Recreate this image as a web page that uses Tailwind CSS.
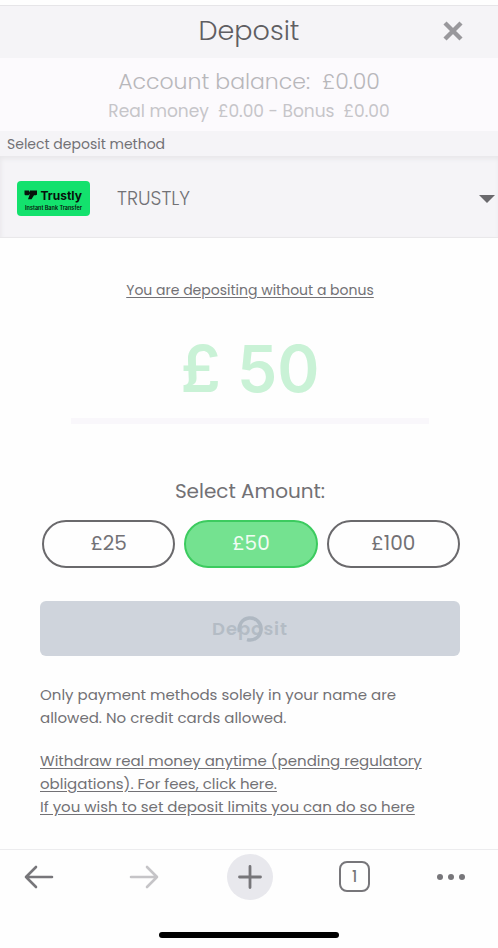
<!DOCTYPE html>
<html lang="en">
<head>
<meta charset="utf-8">
<meta name="viewport" content="width=device-width, initial-scale=1">
<title>Deposit</title>
<script src="https://cdn.jsdelivr.net/npm/@tailwindcss/browser@4"></script>
</head>
<body class="flex min-h-screen flex-col bg-[#fefefe] font-['Poppins','Inter',sans-serif] text-[#727175]">
  <header class="mt-[5px] grid h-[53px] grid-cols-[1fr_auto_1fr] items-center border-t border-[#e6e5e8] bg-[#f5f4f7] px-[31px] pb-[2px]">
    <h1 class="col-start-2 text-[27px] font-light leading-8 text-[#5f5e62]">Deposit</h1>
    <button type="button" aria-label="Close" class="justify-self-end p-1 text-[#99989c]">
      <svg class="size-5" viewBox="0 0 20 20" fill="none" stroke="currentColor" stroke-width="4.4"><path d="M2 2 18 18M18 2 2 18"/></svg>
    </button>
  </header>

  <main class="flex-1">
    <section class="h-[73px] bg-[#fcfafd] pt-2 text-center text-[#c6c5c9]">
      <p class="text-[22px] font-light leading-8 text-[#b8b7bb]">Account balance: &nbsp;£0.00</p>
      <p class="text-[17px] leading-[26px]">Real money &nbsp;£0.00 - Bonus &nbsp;£0.00</p>
    </section>

    <label for="method" class="block bg-[#f5f4f7] pl-[7px] pt-[2px] text-sm leading-[23px]">Select deposit method</label>
    <div class="flex h-[82px] items-center border-b border-[#e9e8ea] bg-[#f5f4f7] pl-[17px] pt-[3px] shadow-[inset_1px_3px_4px_#e8e7ea]">
      <svg class="h-[35px] w-[73px] shrink-0" viewBox="0 0 73 35" role="img" aria-label="Trustly Instant Bank Transfer">
        <rect width="73" height="35" rx="4" fill="#13e16d"/>
        <path fill="#08120c" d="M7.500 9.500H12v2l1-2h7v3.500c0 .8-.5 1.200-1.200 1.200H17l-2.500 4H11l2-5.500-1.500 1.500H9c-1 0-1.500-.5-1.500-1.500Z"/>
        <text x="23.500" y="18.500" font-family="Inter, sans-serif" font-weight="700" font-size="12" fill="#08120c">Trustly</text>
        <text x="8" y="29" font-family="Inter, sans-serif" font-weight="600" font-size="5.500" fill="#08120c">Instant Bank Transfer</text>
      </svg>
      <div class="relative ml-[27px] flex-1">
        <select id="method" class="block h-[50px] w-full appearance-none bg-transparent pt-[2px] text-[19px] font-light">
          <option>TRUSTLY</option>
        </select>
        <svg class="pointer-events-none absolute right-[3px] top-[22px] h-2 w-4" viewBox="0 0 16 8" aria-hidden="true"><path fill="#6a696d" d="M0 0h16L8 8Z"/></svg>
      </div>
    </div>

    <div class="pl-10 pr-[38px] pt-10">
      <p class="text-center text-sm leading-6"><a href="#bonus" class="underline underline-offset-2">You are depositing without a bonus</a></p>

      <div class="mx-[31px] mt-[30px] border-b-[6px] border-[#f9f7fb] pb-[13px]">
        <input aria-label="Deposit amount" value="£ 50" class="block h-[73px] w-full bg-transparent text-center font-['Inter',sans-serif] text-[64px] font-semibold text-[#c9f2d6] outline-none">
      </div>

      <h2 class="mt-[51px] text-center text-xl leading-8">Select Amount:</h2>
      <div class="mt-[13px] grid grid-cols-3 gap-[9px] pl-[2px] text-xl">
        <button type="button" class="h-12 rounded-full border-2 border-[#6a696c] pb-[2px]">£25</button>
        <button type="button" aria-pressed="true" class="h-12 rounded-full border-2 border-[#3ccb5f] bg-[#74e290] pb-[2px] text-[#f1fcf3]">£50</button>
        <button type="button" class="h-12 rounded-full border-2 border-[#6a696c] pb-[2px]">£100</button>
      </div>

      <button type="button" disabled class="relative mt-[33px] h-[55px] w-full rounded-md bg-[#cfd4dc] text-lg font-semibold tracking-wider text-[#b4bcc5]">
        Deposit
        <svg class="absolute inset-0 m-auto size-7" viewBox="0 0 28 28" fill="none" stroke="#afb8c2" stroke-width="3.500" aria-hidden="true"><path d="M3.500 17A11 11 0 1 1 11 24.600"/></svg>
      </button>

      <div class="pt-[27px] text-[15px] leading-[23px]">
        <p>Only payment methods solely in your name are<br>allowed. No credit cards allowed.</p>
        <p class="mt-5"><a href="#withdraw" class="underline underline-offset-2">Withdraw real money anytime (pending regulatory obligations). For fees, click here.</a></p>
        <p><a href="#limits" class="underline underline-offset-2">If you wish to set deposit limits you can do so here</a></p>
      </div>
    </div>
  </main>

  <footer class="border-t border-[#ececee] bg-[#fefefe] pb-[10px] text-[#77767a]">
    <nav aria-label="Browser" class="flex h-[53px] items-center justify-between pl-4 pr-[33px]">
      <button type="button" aria-label="Back" class="grid w-[46px] place-items-center"><svg class="size-8" viewBox="0 0 32 32" fill="none" stroke="currentColor" stroke-width="2.600" stroke-linecap="round" stroke-linejoin="round"><path d="M29 16H3M13 6 3 16l10 10"/></svg></button>
      <button type="button" aria-label="Forward" class="grid w-[46px] place-items-center text-[#c5c4c7]"><svg class="size-8" viewBox="0 0 32 32" fill="none" stroke="currentColor" stroke-width="2.600" stroke-linecap="round" stroke-linejoin="round"><path d="M3 16h26M19 6l10 10-10 10"/></svg></button>
      <button type="button" aria-label="New tab" class="grid size-[46px] place-items-center rounded-full bg-[#e8e8ed]"><svg class="size-6" viewBox="0 0 24 24" fill="none" stroke="currentColor" stroke-width="2.800" stroke-linecap="round"><path d="M12 1.500v21M1.500 12h21"/></svg></button>
      <button type="button" aria-label="Tabs" class="grid w-[46px] place-items-center"><span class="grid size-[31px] place-items-center rounded-lg border-2 border-current text-[15px] font-medium leading-none">1</span></button>
      <button type="button" aria-label="More"><svg class="h-6 w-7" viewBox="0 0 28 24" fill="currentColor"><circle cx="3" cy="12" r="3"/><circle cx="14" cy="12" r="3"/><circle cx="25" cy="12" r="3"/></svg></button>
    </nav>
    <div class="mx-auto mt-[29px] h-[6px] w-[36%] rounded-full bg-black"></div>
  </footer>
</body>
</html>
